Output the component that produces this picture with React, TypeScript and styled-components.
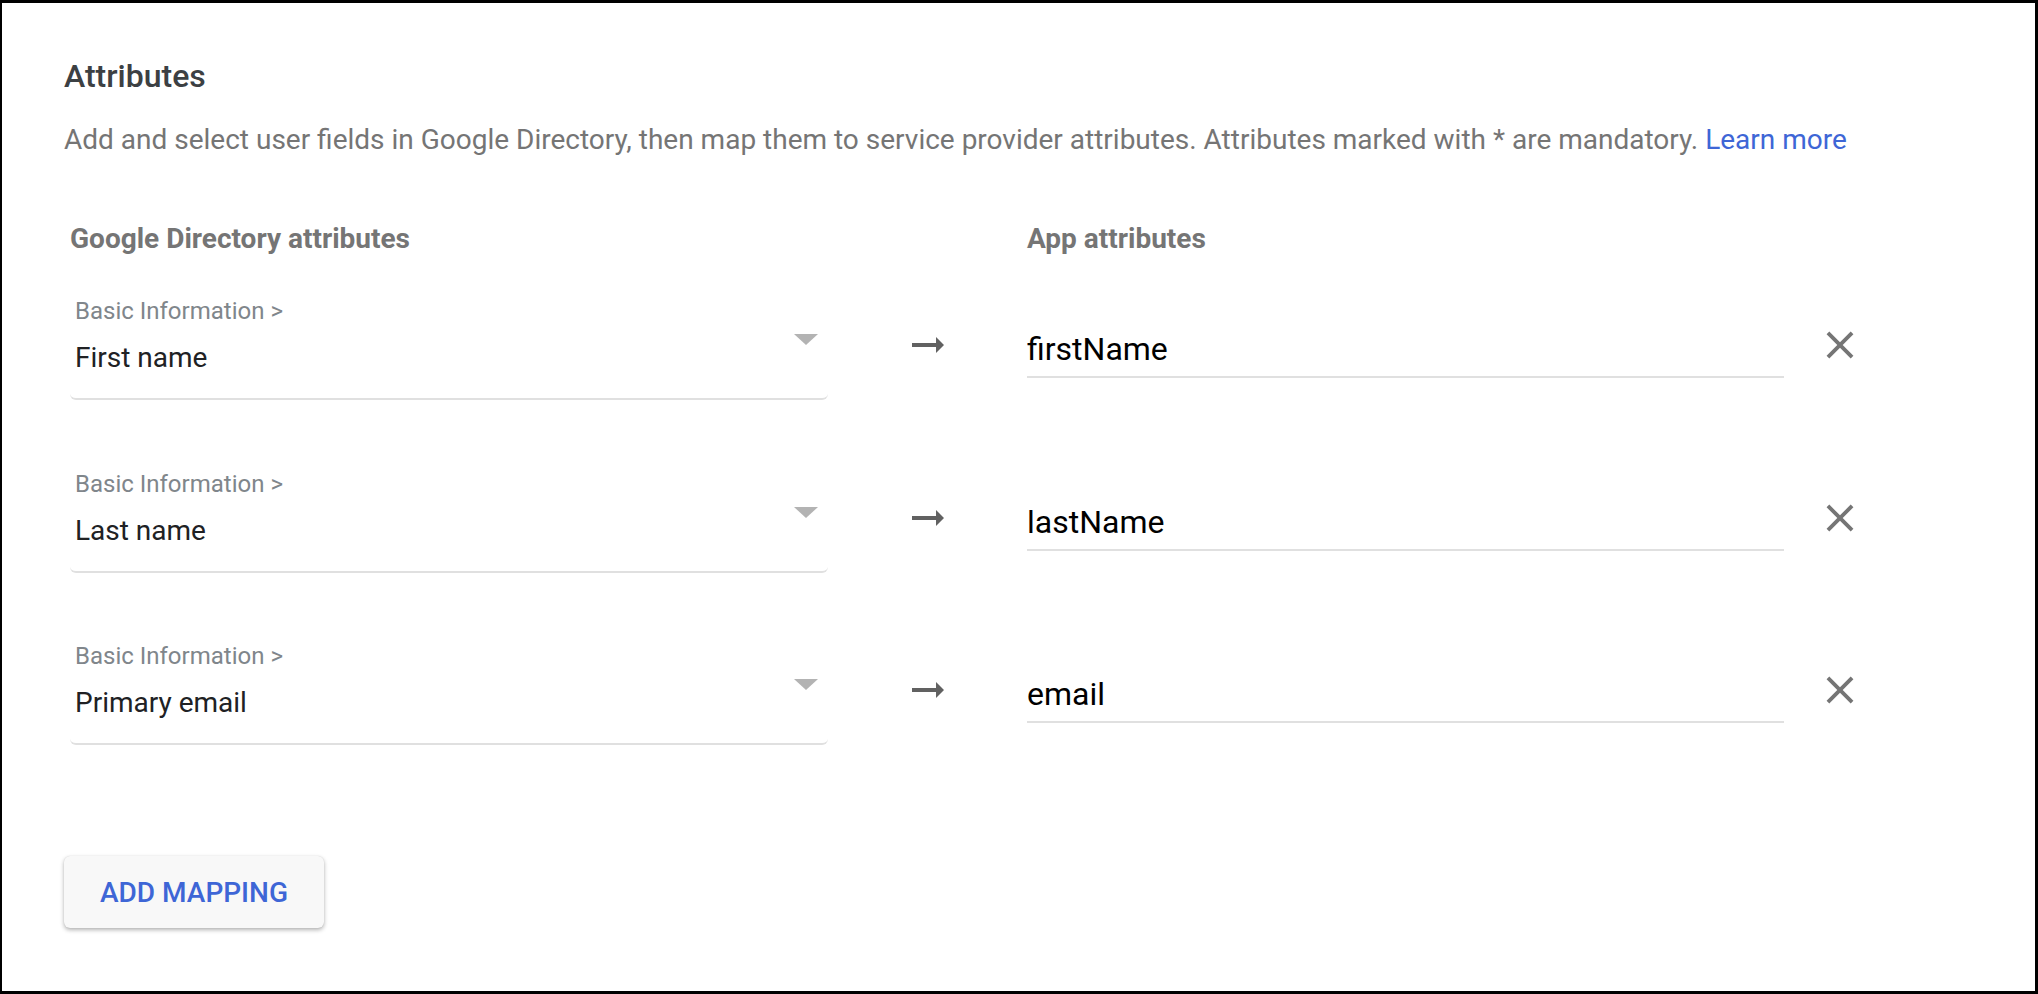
import React from "react";
import styled, { createGlobalStyle } from "styled-components";

const GlobalStyle = createGlobalStyle`
  html, body { margin: 0; padding: 0; background: #fff; }
  body { font-family: Roboto, "Noto Sans", Arial, sans-serif; }
  * { box-sizing: border-box; }
`;

const Frame = styled.div`
  width: 2038px;
  height: 994px;
  border: 3px solid #000;
  border-left-width: 2px;
  background: #fff;
  padding: 53px 0 0 62px;
  display: flex;
  flex-direction: column;
`;

const Heading = styled.h2`
  margin: 0;
  font-size: 32px;
  line-height: 40px;
  font-weight: 500;
  color: #3c4043;
`;

const Description = styled.p`
  margin: 26px 0 0;
  font-size: 28px;
  line-height: 36px;
  color: #757575;
`;

const Link = styled.a`
  color: #3e66d6;
  text-decoration: none;
`;

const Grid = styled.div<{ $top: number }>`
  display: grid;
  grid-template-columns: 758px 199px 757px 112px;
  margin: ${(p) => p.$top}px 0 0 6px;
  align-items: start;
`;

const ColumnHeader = styled.div`
  font-size: 28px;
  line-height: 32px;
  font-weight: 700;
  color: #757575;
`;

const Rows = styled.div`
  display: flex;
  flex-direction: column;
  gap: 67.5px;
  margin-top: 40px;
`;

const Select = styled.div`
  position: relative;
  padding: 1px 0 22px 5px;
  border-bottom: 2px solid #e0e0e0;
  border-radius: 0 0 6px 6px;
`;

const SelectLabel = styled.div`
  font-size: 24px;
  line-height: 30px;
  color: #80868b;
`;

const SelectValue = styled.div`
  margin-top: 14px;
  font-size: 28px;
  line-height: 36px;
  color: #202124;
`;

const Caret = styled.span`
  position: absolute;
  right: 10px;
  top: 39px;
  width: 0;
  height: 0;
  border-left: 12px solid transparent;
  border-right: 12px solid transparent;
  border-top: 11px solid #b3b3b3;
`;

const IconCell = styled.div<{ $top: number }>`
  display: flex;
  justify-content: center;
  margin-top: ${(p) => p.$top}px;
  color: ${(p) => p.color};
`;

const Input = styled.div`
  margin-top: 34px;
  padding-bottom: 7px;
  border-bottom: 2px solid #e0e0e0;
  font-size: 32px;
  line-height: 40px;
  color: #000;
`;

const Button = styled.button`
  margin-top: 111px;
  align-self: flex-start;
  width: 260px;
  height: 72px;
  border: none;
  border-radius: 6px;
  background: #f8f8f8;
  box-shadow: 0 2px 4px rgba(0, 0, 0, 0.3), 0 0 1px rgba(0, 0, 0, 0.15);
  font-family: Roboto, Arial, sans-serif;
  font-size: 28px;
  font-weight: 500;
  color: #3e66d6;
  padding: 0;
`;

const ArrowIcon = () => (
  <svg width="48" height="48" viewBox="0 0 24 24" fill="currentColor">
    <path d="M16.01 11H4v2h12.01v3L20 12l-3.99-4z" />
  </svg>
);

const CloseIcon = () => (
  <svg width="46" height="46" viewBox="0 0 24 24" fill="currentColor">
    <path d="M19 6.41L17.59 5 12 10.59 6.41 5 5 6.41 10.59 12 5 17.59 6.41 19 12 13.41 17.59 19 19 17.59 13.41 12z" />
  </svg>
);

const mappings = [
  { dir: "First name", app: "firstName" },
  { dir: "Last name", app: "lastName" },
  { dir: "Primary email", app: "email" },
];

export default function App() {
  return (
    <>
      <GlobalStyle />
      <Frame>
        <Heading>Attributes</Heading>
        <Description>
          Add and select user fields in Google Directory, then map them to service provider
          attributes. Attributes marked with * are mandatory. <Link href="#">Learn more</Link>
        </Description>
        <Grid $top={65}>
          <ColumnHeader>Google Directory attributes</ColumnHeader>
          <div />
          <ColumnHeader>App attributes</ColumnHeader>
          <div />
        </Grid>
        <Rows>
          {mappings.map((m) => (
            <Grid $top={0} key={m.app}>
              <Select>
                <SelectLabel>Basic Information &gt;</SelectLabel>
                <SelectValue>{m.dir}</SelectValue>
                <Caret />
              </Select>
              <IconCell $top={26} color="#616161">
                <ArrowIcon />
              </IconCell>
              <Input>{m.app}</Input>
              <IconCell $top={27} color="#757575">
                <CloseIcon />
              </IconCell>
            </Grid>
          ))}
        </Rows>
        <Button>ADD MAPPING</Button>
      </Frame>
    </>
  );
}
